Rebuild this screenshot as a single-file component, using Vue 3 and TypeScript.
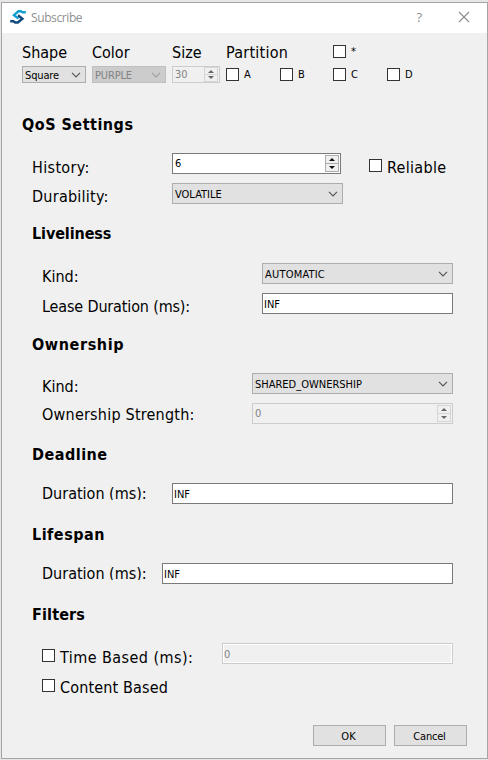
<script setup lang="ts">
import { ref } from 'vue'

const partitions = ref(['A', 'B', 'C', 'D'])
const history = ref('6')
const infinite = 'INF'
</script>

<template>
  <div class="desktop">
    <div class="window">
      <header class="titlebar">
        <svg class="logo" viewBox="0 0 16 14" fill="none">
          <path d="M15.8 2.2H12.6L10.8 1.3H8.4L4 5.2L8.4 8.6" stroke="#109fd0" stroke-width="2.4" />
          <path d="M.2 11.2H3.4L5.2 12.5H7.8L12.4 8.7L8 5.2" stroke="#12497c" stroke-width="2.4" />
        </svg>
        <span class="title">Subscribe</span>
        <span class="help">?</span>
        <svg class="close" viewBox="0 0 12 12"><path d="M1 1L11 11M11 1L1 11" stroke="#8c8c8c" stroke-width="1.1" /></svg>
      </header>

      <main class="content">
        <section class="topics">
          <div class="col shape">
            <span class="label">Shape</span>
            <div class="combo small"><span class="tight">Square</span><svg class="chev" viewBox="0 0 10 6"><path d="M1 .8L5 4.8L9 .8" /></svg></div>
          </div>
          <div class="col color">
            <span class="label">Color</span>
            <div class="combo small off"><span class="tight">PURPLE</span><svg class="chev" viewBox="0 0 10 6"><path d="M1 .8L5 4.8L9 .8" /></svg></div>
          </div>
          <div class="col size">
            <span class="label">Size</span>
            <div class="spin small off"><span>30</span><div class="steps"><i class="up"></i><i class="down"></i></div></div>
          </div>
          <div class="col partition">
            <div class="parthead">
              <span class="label">Partition</span>
              <div class="check star"><i class="box"></i><span>*</span></div>
            </div>
            <div class="parts">
              <div v-for="p in partitions" :key="p" class="check"><i class="box"></i><span>{{ p }}</span></div>
            </div>
          </div>
        </section>

        <h1 class="heading qos">QoS Settings</h1>

        <div class="row history">
          <span class="label l4 hist">History:</span>
          <div class="spin hspin"><span>{{ history }}</span><div class="steps"><i class="up"></i><i class="down"></i></div></div>
          <div class="option reliable"><i class="box"></i><span class="label l4">Reliable</span></div>
        </div>
        <div class="row gap">
          <span class="label l3 dura">Durability:</span>
          <div class="combo cdur"><span>VOLATILE</span><svg class="chev" viewBox="0 0 10 6"><path d="M1 .8L5 4.8L9 .8" /></svg></div>
        </div>

        <h2 class="heading live">Liveliness</h2>
        <div class="row sub first">
          <span class="label l3 kind">Kind:</span>
          <div class="combo grow"><span class="auto">AUTOMATIC</span><svg class="chev" viewBox="0 0 10 6"><path d="M1 .8L5 4.8L9 .8" /></svg></div>
        </div>
        <div class="row sub gap">
          <span class="label l3 lease">Lease Duration (ms):</span>
          <div class="field grow">{{ infinite }}</div>
        </div>

        <h2 class="heading own">Ownership</h2>
        <div class="row sub owned">
          <span class="label l3 okind">Kind:</span>
          <div class="combo grow"><span>SHARED_OWNERSHIP</span><svg class="chev" viewBox="0 0 10 6"><path d="M1 .8L5 4.8L9 .8" /></svg></div>
        </div>
        <div class="row sub gap">
          <span class="label l1 strength">Ownership Strength:</span>
          <div class="spin off grow"><span>0</span><div class="steps"><i class="up"></i><i class="down"></i></div></div>
        </div>

        <h2 class="heading wide">Deadline</h2>
        <div class="row sub owned">
          <span class="label clip dead">Duration (ms):</span>
          <div class="field grow">{{ infinite }}</div>
        </div>

        <h2 class="heading wide">Lifespan</h2>
        <div class="row sub owned">
          <span class="label clip life">Duration (ms):</span>
          <div class="field grow">{{ infinite }}</div>
        </div>

        <h2 class="heading filters">Filters</h2>
        <div class="row sub owned">
          <div class="option time"><i class="box"></i><span class="label l4">Time Based (ms):</span></div>
          <div class="field off grow">0</div>
        </div>
        <div class="row sub gap">
          <div class="option contentbased"><i class="box"></i><span class="label l4">Content Based</span></div>
        </div>

        <footer class="actions">
          <button class="btn ok">OK</button>
          <button class="btn cancel">Cancel</button>
        </footer>
      </main>
    </div>
  </div>
</template>

<style>
body { background: #e8e8e8; overflow: hidden; }
</style>

<style scoped>
* { box-sizing: border-box; }
.desktop { width: 488px; height: 760px; padding: 2px 0 1px 1px; background: #e6e6e6; font: 11px/15px "DejaVu Sans Condensed", "DejaVu Sans", sans-serif; font-stretch: condensed; color: #000; }
.window { width: 487px; height: 757px; border: 1px solid #a5a5a5; background: #f0f0f0; }
.titlebar { height: 30px; background: #fff; display: flex; align-items: flex-start; color: #8f8f8f; }
.logo { width: 16px; height: 14px; margin: 7px 0 0 8px; }
.title { font: 12px/16px "Open Sans", "Noto Sans", sans-serif; letter-spacing: -.4px; margin: 7px 0 0 5px; flex: 1; }
.help { font: 13px/16px "Open Sans", sans-serif; margin: 6px 36px 0 0; }
.close { width: 12px; height: 12px; margin: 8px 17px 0 0; }
.content { padding: 9px 34px 0 20px; }
.label { display: block; font-size: 16px; line-height: 22px; white-space: nowrap; flex: none; }
.topics { display: flex; height: 42px; }
.col { flex: none; }
.col .label { height: 24px; }
.shape { width: 70px; }
.color { width: 80px; }
.size { width: 54px; }
.shape .combo { width: 64px; }
.color .combo { width: 74px; }
.size .spin { width: 48px; }
.parthead { display: flex; height: 26px; }
.parthead .label { width: 107px; letter-spacing: .25px; }
.star { padding-top: 3px; }
.parts { display: grid; grid-template-columns: 54px 53px 54px 40px; }
.check { display: flex; height: 13px; gap: 5px; line-height: 13px; }
.box { display: block; width: 13px; height: 13px; border: 1px solid #333; background: #fff; flex: none; }
.heading { margin: 20px 0 0 10px; font-size: 16px; line-height: 22px; height: 20px; font-weight: bold; white-space: nowrap; }
.heading.qos { margin: 30px 0 0; letter-spacing: .5px; }
.heading.live { margin-top: 19px; letter-spacing: -.1px; }
.heading.own { letter-spacing: .6px; }
.heading.wide { letter-spacing: .5px; }
.heading.filters { letter-spacing: .15px; }
.row { display: flex; align-items: flex-start; height: 21px; padding-left: 10px; }
.row.history { margin-top: 19px; }
.row.gap { margin-top: 9px; }
.row.sub { padding-left: 20px; }
.row.first { margin-top: 20px; }
.row.owned { margin-top: 19px; }
.l4 { padding-top: 4px; }
.l3 { padding-top: 3px; }
.l1 { padding-top: 1px; }
.hist, .dura { width: 140px; }
.hist { letter-spacing: .35px; }
.dura { letter-spacing: .25px; }
.kind, .lease { width: 220px; }
.lease { letter-spacing: -.15px; }
.okind, .strength { width: 210px; }
.strength { letter-spacing: .22px; }
.dead { width: 130px; }
.life { width: 120px; }
.clip { height: 17px; overflow: hidden; }
.grow { flex: 1; }
.combo { display: flex; align-items: center; justify-content: space-between; height: 21px; padding: 1px 4px 0 2px; border: 1px solid #adadad; background: #e1e1e1; }
.cdur { width: 171px; }
.combo.small { height: 17px; }
.combo.off { background: #ccc; border-color: #bfbfbf; color: #838383; }
.tight { letter-spacing: -.15px; }
.auto { letter-spacing: .2px; }
.chev { width: 10px; height: 6px; fill: none; stroke: #555; stroke-width: 1.2; }
.off .chev { stroke: #a0a0a0; }
.spin { display: flex; align-items: center; justify-content: space-between; height: 21px; border: 1px solid #7a7a7a; background: #fff; padding: 1px 1px 1px 2px; }
.hspin { width: 169px; }
.spin.small { height: 17px; padding: 0 1px 0 2px; }
.spin.off, .field.off { background: #f0f0f0; border-color: #ccc; color: #838383; }
.field.off { box-shadow: inset 0 0 0 1px #fff; }
.steps { width: 14px; height: 17px; border: 1px solid #adadad; background: linear-gradient(#adadad, #adadad) center / 100% 1px no-repeat #f0f0f0; display: flex; flex-direction: column; justify-content: space-around; align-items: center; }
.small .steps { height: 15px; }
.off .steps { border-color: #d5d5d5; background: linear-gradient(#d5d5d5, #d5d5d5) center / 100% 1px no-repeat #f0f0f0; }
.up, .down { width: 0; height: 0; border: 3px solid transparent; }
.up { border-top: 0; border-bottom-color: #111; }
.down { border-bottom: 0; border-top-color: #111; }
.off .up { border-bottom-color: #666; }
.off .down { border-top-color: #666; }
.field { height: 21px; border: 1px solid #7a7a7a; background: #fff; padding: 3px 1px 0; line-height: 15px; }
.option { display: flex; flex: none; gap: 5px; }
.option .box { margin-top: 6px; }
.reliable { margin-left: 28px; letter-spacing: .3px; }
.time { width: 180px; letter-spacing: .45px; }
.contentbased { letter-spacing: .15px; }
.actions { display: flex; justify-content: flex-end; gap: 8px; margin: 31px -14px 0 0; }
.btn { width: 73px; height: 21px; padding: 1px 0 0; border: 1px solid #adadad; background: #e1e1e1; font: inherit; line-height: 17px; color: #000; }
.ok { padding-right: 2px; }
.cancel { letter-spacing: -.2px; padding-right: 2px; }
</style>
